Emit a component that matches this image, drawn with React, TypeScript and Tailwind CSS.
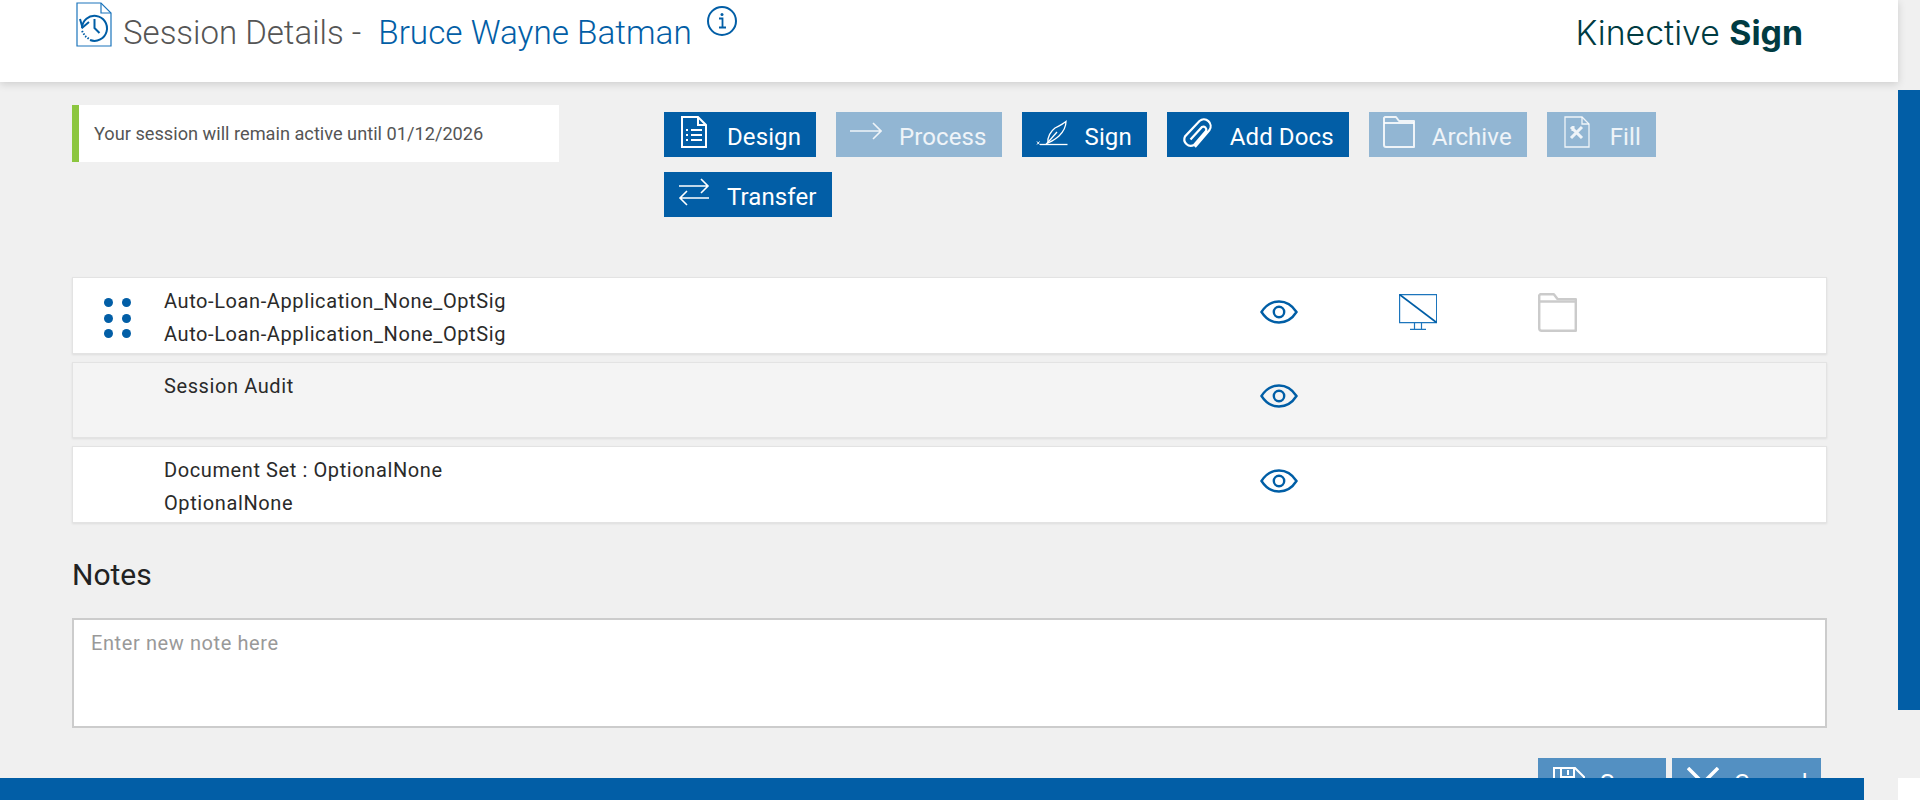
import { ReactNode } from 'react'

const roboto = { fontFamily: 'Roboto, sans-serif' }

function DesignIcon() {
  return (
    <svg width="26" height="32" viewBox="0 0 26 32" fill="none" stroke="currentColor" strokeWidth="2">
      <path d="M1 1h16l8 8v22H1z" />
      <path d="M17 1v8h8" />
      <path d="M10 14h11M10 19h11M10 24h11" />
      <path d="M5 14h2M5 19h2M5 24h2" />
    </svg>
  )
}

function ArrowRightIcon() {
  return (
    <svg width="32" height="20" viewBox="0 0 32 20" fill="none" stroke="currentColor" strokeWidth="1.6">
      <path d="M0 9h31M23 1l8 8-8 8" />
    </svg>
  )
}

function SignIcon() {
  return (
    <svg width="32" height="28" viewBox="0 0 32 28" fill="none" stroke="currentColor" strokeWidth="1.300">
      <path d="M4 26.500h27.500" />
      <path d="M1 23.500l2.500 3M3.500 23.500l-2.500 3" strokeWidth="1" />
      <path d="M12 25C11 19 15 13 19 10c4-2 8-4 11-6.500 0 5.500-3 10.500-7 14.500-3 3-7 5-11 7z" />
      <path d="M10 26.500 21 14" />
    </svg>
  )
}

function ClipIcon() {
  return (
    <svg className="mt-[3px]" width="32" height="32" viewBox="0 0 32 32" fill="none" stroke="currentColor" strokeWidth="2.200">
      <path d="M14 30 28.500 13A6.800 6.800 0 0 0 18.500 4L4 19.500A6.500 6.500 0 0 0 13 28L25 14A3 3 0 0 0 21 10L9.500 22.500" />
    </svg>
  )
}

function FolderIcon({ className = '' }: { className?: string }) {
  return (
    <svg className={className} width="32" height="32" viewBox="0 0 32 32" fill="none" stroke="currentColor" strokeWidth="2">
      <path d="M2 1h11l3 4h15v26H3a2 2 0 0 1-2-2V2z" strokeLinejoin="round" />
      <path d="M1 7h30" />
    </svg>
  )
}

function FillIcon() {
  return (
    <svg width="26" height="32" viewBox="0 0 26 32" fill="none" stroke="currentColor">
      <path d="M1 1h17l7 7v23H1z" strokeWidth="1.300" />
      <path d="M18 1v7h7" strokeWidth="1.300" />
      <path d="M7 11l11 11M18 11 7 22M9 10v5" strokeWidth="3" />
    </svg>
  )
}

function TransferIcon() {
  return (
    <svg width="32" height="28" viewBox="0 0 32 28" fill="none" stroke="currentColor" strokeWidth="1.6">
      <path d="M1 8h29M23 1l7 7-7 7" />
      <path d="M31 20H2M9 13l-7 7 7 7" />
    </svg>
  )
}

function SaveIcon() {
  return (
    <svg className="mt-[5px]" width="32" height="32" viewBox="0 0 32 32" fill="none" stroke="currentColor" strokeWidth="2">
      <path d="M1 1h21l9 9v21H1z" />
      <path d="M8 1v9h13V1M15 3v5" />
    </svg>
  )
}

function HistoryDocIcon() {
  return (
    <svg width="36" height="46" viewBox="0 0 36 46" fill="none" stroke="#1c75bc">
      <path d="M1 2h24l10 10v33H1z" strokeWidth="1.200" />
      <path d="M25 2v10h10" strokeWidth="1.200" />
      <g stroke="#005ea6" strokeWidth="2">
        <path d="M6 27a12.500 12.500 0 1 1 8 12" strokeWidth="2" />
        <path d="M4 18l2.500 8.500L13 21" />
        <path d="M18.500 18v9l5 5" />
      </g>
      <path d="M6 30l3 5 4 3" stroke="#005ea6" strokeWidth="2" strokeDasharray="1.500 1.500" />
    </svg>
  )
}

function EyeIcon() {
  return (
    <svg width="38" height="24" viewBox="0 0 38 24" fill="none" stroke="#005ea6" strokeWidth="2.400">
      <path d="M1.500 12C6 5 12 1.500 19 1.500S32 5 36.500 12C32 19 26 22.500 19 22.500S6 19 1.500 12z" />
      <circle cx="19" cy="12" r="5.200" />
    </svg>
  )
}

function MonitorOffIcon() {
  return (
    <svg width="38" height="36" viewBox="0 0 38 36" fill="none" stroke="#1c75bc" strokeWidth="1.200">
      <path d="M.6.600h37v28H.6z" />
      <path d="M.6.600l37 28" stroke="#005ea6" strokeWidth="1.800" />
      <path d="M15.500 29v6M22.500 29v6M11 35.400h16" />
    </svg>
  )
}

function ActionButton({ icon, label, disabled }: { icon: ReactNode; label: string; disabled?: boolean }) {
  return (
    <button
      className={`flex h-[45px] items-center gap-[17px] pl-[14px] pr-[15px] text-[24px] font-normal tracking-[0.1px] ${
        disabled ? 'bg-[#92b6d3] text-white/85' : 'bg-[#025ea6] text-white'
      }`}
    >
      <span className="-mt-[6px] flex w-[32px] justify-center">{icon}</span>
      <span className="mt-[4px]">{label}</span>
    </button>
  )
}

function DocRow({ alt, children }: { alt?: boolean; children?: ReactNode }) {
  return (
    <div className={`flex h-[76.500px] border border-[#e3e3e3] shadow-[0_1px_2px_rgba(0,0,0,0.08)] ${alt ? 'bg-[#f4f4f4]' : 'bg-white'}`}>
      {children}
    </div>
  )
}

function RowText({ lines }: { lines: string[] }) {
  return (
    <div className="w-[1092px] pt-[7px] text-[20px] leading-[33px] tracking-[0.6px] text-[#2a2a2a]">
      {lines.map((l, i) => (
        <div key={i}>{l}</div>
      ))}
    </div>
  )
}

export default function App() {
  return (
    <div className="relative flex h-[800px] overflow-hidden bg-[#f0f0f0]" style={roboto}>
      <div className="w-[1898px]">
        {/* header */}
        <header className="flex h-[82px] justify-between bg-white pl-[76px] pr-[95px] shadow-[0_2px_8px_rgba(0,0,0,0.15)]">
          <div className="flex items-start">
            <div className="mt-[1px]">
              <HistoryDocIcon />
            </div>
            <h1 className="ml-[11px] mt-[14px] text-[33px] font-light leading-[38px] text-[#555]">
              Session Details -<span className="ml-[17px] text-[33.300px] text-[#025ea6]">Bruce Wayne Batman</span>
            </h1>
            <svg className="ml-[15px] mt-[6px]" width="30" height="30" viewBox="0 0 30 30" fill="none" stroke="#025ea6">
              <circle cx="15" cy="15" r="14" strokeWidth="2" />
              <path d="M12 12.500h3.500V21M12 21.500h7" strokeWidth="1.800" />
              <circle cx="15" cy="8.500" r="1.500" fill="#025ea6" stroke="none" />
            </svg>
          </div>
          <div className="mt-[13px] text-[33.800px] font-light leading-[40px] text-[#003b42]" style={{ fontFamily: 'Inter, sans-serif' }}>
            Kinective <span className="font-bold">Sign</span>
          </div>
        </header>

        {/* session banner + actions */}
        <div className="mt-[23px] flex pl-[72px]">
          <div className="flex h-[57px] w-[487px] items-center border-l-[7px] border-[#8cc63f] bg-white pl-[15px] pt-[1px] text-[18.200px] text-[#555]">
            Your session will remain active until 01/12/2026
          </div>
          <div className="ml-[105px] mt-[7px] flex w-[1000px] flex-wrap gap-x-[20px] gap-y-[15px]">
            <ActionButton icon={<DesignIcon />} label="Design" />
            <ActionButton icon={<ArrowRightIcon />} label="Process" disabled />
            <ActionButton icon={<SignIcon />} label="Sign" />
            <ActionButton icon={<ClipIcon />} label="Add Docs" />
            <ActionButton icon={<FolderIcon />} label="Archive" disabled />
            <ActionButton icon={<FillIcon />} label="Fill" disabled />
            <ActionButton icon={<TransferIcon />} label="Transfer" />
          </div>
        </div>

        {/* documents */}
        <div className="ml-[72px] mt-[60px] flex w-[1755px] flex-col gap-[8px]">
          <DocRow>
            <div className="grid h-[38px] w-[91px] grid-cols-[8px_8px] gap-x-[10px] gap-y-[6.500px] pl-[31px] pt-[20px]">
              {[0, 1, 2, 3, 4, 5].map((i) => (
                <span key={i} className="h-[9px] w-[9px] rounded-full bg-[#025ea6]" />
              ))}
            </div>
            <RowText lines={['Auto-Loan-Application_None_OptSig', 'Auto-Loan-Application_None_OptSig']} />
            <div className="ml-[4px] pt-[22px]">
              <EyeIcon />
            </div>
            <div className="ml-[101px] pt-[16px]">
              <MonitorOffIcon />
            </div>
            <div className="ml-[101px] pt-[15px] text-[#cbcbcb]">
              <FolderIcon className="h-[39px] w-[39px]" />
            </div>
          </DocRow>
          <DocRow alt>
            <div className="w-[91px]" />
            <RowText lines={['Session Audit']} />
            <div className="ml-[4px] pt-[21px]">
              <EyeIcon />
            </div>
          </DocRow>
          <DocRow>
            <div className="w-[91px]" />
            <RowText lines={['Document Set : OptionalNone', 'OptionalNone']} />
            <div className="ml-[4px] pt-[22px]">
              <EyeIcon />
            </div>
          </DocRow>
        </div>

        {/* notes */}
        <div className="ml-[72px] mt-[34px] w-[1755px]">
          <h2 className="text-[30px] leading-[36px] text-[#222]">Notes</h2>
          <div className="mt-[25.500px] h-[110px] border-2 border-[#cccccc] bg-white py-[10px] pl-[17px] pr-[16px] text-[20px] leading-[26px] tracking-[0.6px] text-[#999]">
            Enter new note here
          </div>
          <div className="mr-[6px] mt-[30px] flex justify-end gap-[6px]">
            <button className="flex h-[45px] w-[128px] items-center gap-[15px] bg-[#5390c2] pl-[15px] text-[24px] tracking-[0.1px] text-white">
              <SaveIcon />
              <span className="mt-[5px]">Save</span>
            </button>
            <button className="flex h-[45px] w-[149px] items-center gap-[15px] bg-[#5390c2] pl-[15px] text-[24px] tracking-[0.1px] text-white">
              <svg className="mt-[5px]" width="32" height="32" viewBox="0 0 32 32" fill="none" stroke="currentColor" strokeWidth="3.500">
                <path d="M1 1l30 30M31 1 1 31" />
              </svg>
              <span className="mt-[5px]">Cancel</span>
            </button>
          </div>
        </div>
      </div>

      {/* scroll rail */}
      <div className="flex w-[22px] flex-col">
        <div className="h-[90px]" />
        <div className="h-[620px] bg-[#025ea6]" />
        <div className="h-[68px]" />
        <div className="flex-1 bg-white" />
      </div>

      {/* footer sits over the page content */}
      <div className="absolute bottom-0 left-0 h-[22px] w-[1864px] bg-[#025ea6]" />
    </div>
  )
}
